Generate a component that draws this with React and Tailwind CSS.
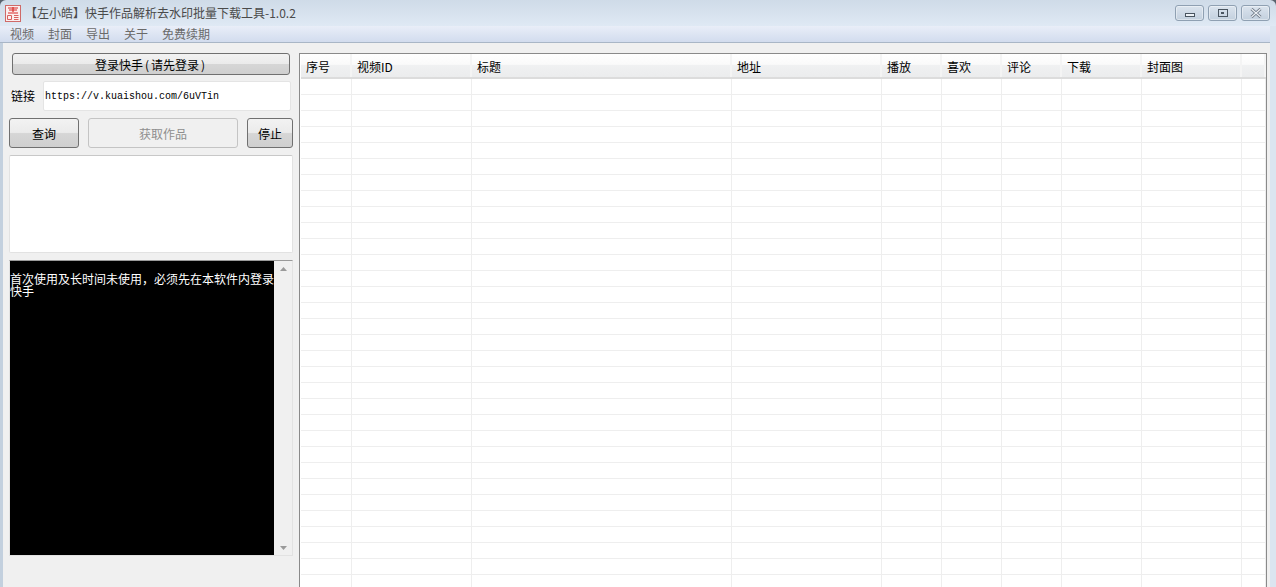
const cjk = "font-['Noto_Sans_CJK_SC','Liberation_Sans',sans-serif]";

const menus = ['视频', '封面', '导出', '关于', '免费续期'];

const columns = [
  { label: '序号', width: 'w-[51px]' },
  { label: '视频ID', width: 'w-[120px]' },
  { label: '标题', width: 'w-[260px]' },
  { label: '地址', width: 'w-[150px]' },
  { label: '播放', width: 'w-[60px]' },
  { label: '喜欢', width: 'w-[60px]' },
  { label: '评论', width: 'w-[60px]' },
  { label: '下载', width: 'w-[80px]' },
  { label: '封面图', width: 'w-[100px]' },
  { label: '', width: 'flex-1' },
];

const rows = Array.from({ length: 32 }, (_, i) => i);

const AppIcon = () => (
  <svg width="16" height="17" viewBox="0 0 16 17" className="shrink-0">
    <rect x="0.5" y="0.5" width="15" height="16" fill="#fbeeee" stroke="#cf6a68" />
    <path d="M3 3h10M8 2v5M4 5h8M3 8h10" stroke="#d92c2a" strokeWidth="1.2" fill="none" />
    <path d="M2.5 10.5h4v4h-4zM9 10.5h4.5M9 12.5h4.5M9 14.5h4.5" fill="none" stroke="#d8605e" strokeWidth="1" />
  </svg>
);

const WinButton = ({ children }) => (
  <div className="w-[29px] h-[16px] flex items-center justify-center rounded-[3px] border border-[#8fa0b2] bg-gradient-to-b from-[#dbe4ee] to-[#c3d0de] shadow-[inset_0_0_0_1px_rgba(255,255,255,0.4)]">
    {children}
  </div>
);

const PushButton = ({ children, className }) => (
  <button className={`flex items-center justify-center pt-[1px] rounded-[3px] border border-[#707070] bg-[linear-gradient(#f2f2f2_0%,#ebebeb_48%,#d6d6d6_52%,#cfcfcf_100%)] text-[12px] leading-none text-black ${className}`}>
    {children}
  </button>
);

export default function App() {
  return (
    <div className={`${cjk} w-[1276px] h-[587px] overflow-hidden flex flex-col bg-[#59626c]`}>
      {/* title bar */}
      <div className="h-[26px] shrink-0 flex items-center pl-[5px] pr-[6px] rounded-t-[6px] bg-gradient-to-b from-[#cfdbe8] to-[#dfe9f4]">
        <AppIcon />
        <span className="ml-[4px] text-[12px] leading-none text-[#4a4a4a]">【左小皓】快手作品解析去水印批量下载工具-1.0.2</span>
        <div className="ml-auto flex gap-[4px] -mt-[1px]">
          <WinButton>
            <div className="w-[10px] h-[4px] mt-[4px] border border-[#4a5560] bg-[#eef3f8]" />
          </WinButton>
          <WinButton>
            <div className="w-[10px] h-[8px] border border-[#4a5560] flex items-center justify-center">
              <div className="w-[3px] h-[2px] bg-[#4a5560]" />
            </div>
          </WinButton>
          <WinButton>
            <svg width="12" height="10" viewBox="0 0 12 10">
              <path d="M1.5 1l9 8M10.5 1l-9 8" stroke="#6c7784" strokeWidth="3" fill="none" />
              <path d="M1.5 1l9 8M10.5 1l-9 8" stroke="#eef2f6" strokeWidth="1.2" fill="none" />
            </svg>
          </WinButton>
        </div>
      </div>

      {/* frame: left and right window edges */}
      <div className="flex-1 min-h-0 flex flex-col bg-[#f0f0f0] border-l-[3px] border-r-[6px] border-l-[#c3d0de] border-r-[#dbe5f0]">
        {/* menu bar */}
        <div className="h-[17px] shrink-0 -ml-[3px] flex items-center gap-[14px] pl-[10px] bg-gradient-to-b from-[#e9eef8] to-[#d2dcee] border-b border-[#a9b6c6] text-[12px] leading-none text-[#6a6a6a]">
          {menus.map((m) => (
            <span key={m}>{m}</span>
          ))}
        </div>

        <div className="flex-1 min-h-0 flex">
          {/* left panel */}
          <div className="w-[296px] shrink-0 pl-[6px] pt-[10px]">
            <PushButton className="ml-[3px] w-[278px] h-[22px]">
              登录快手<span className="mx-[2px]">(</span>请先登录<span className="mx-[2px]">)</span>
            </PushButton>

            <div className="mt-[6px] flex items-center h-[30px]">
              <span className="ml-[2px] w-[32px] text-[12px] leading-none text-black">链接</span>
              <div className="w-[248px] h-[30px] flex items-center pl-[1px] pt-[1px] bg-white border border-[#e4e4e4] rounded-[2px] font-['Liberation_Mono',monospace] text-[10px] leading-none text-black">
                https://v.kuaishou.com/6uVTin
              </div>
            </div>

            <div className="mt-[7px] flex">
              <PushButton className="w-[70px] h-[30px]">查询</PushButton>
              <button className="ml-[9px] w-[150px] h-[30px] pt-[1px] rounded-[3px] border border-[#c4c4c4] bg-[#f0f0f0] text-[12px] leading-none text-[#8e8e8e]">获取作品</button>
              <PushButton className="ml-[9px] w-[46px] h-[30px]">停止</PushButton>
            </div>

            <div className="mt-[7px] w-[284px] h-[98px] bg-white border border-[#e2e2e2] border-t-[#c8c8c8] rounded-[2px]" />

            <div className="mt-[7px] w-[284px] h-[296px] flex border border-[#e2e2e2] border-t-[#9a9a9a] bg-white">
              <div className="w-[264px] shrink-0 bg-black pt-[12px] text-[12px] leading-[12px] text-white">
                {'首次使用及长时间未使用\uFF0C必须先在本软件内登录快手'}
              </div>
              <div className="flex-1 flex flex-col items-center justify-between pt-[6px] pb-[5px] bg-[#f0f0f0]">
                <svg width="7" height="4" viewBox="0 0 7 4"><path d="M3.5 0L7 4H0z" fill="#9a9a9a" /></svg>
                <svg width="7" height="4" viewBox="0 0 7 4"><path d="M0 0h7L3.5 4z" fill="#9a9a9a" /></svg>
              </div>
            </div>
          </div>

          {/* table */}
          <div className="flex-1 min-w-0 mt-[10px] -mb-[4px] mr-[3px] border border-[#8a8a8a] bg-white overflow-hidden">
            <div className="flex h-[25px] ml-[1px] bg-[linear-gradient(#ffffff_0%,#fafafa_45%,#f0f1f2_50%,#ebeced_100%)] border-b-2 border-[#dcdcdc]">
              {columns.map((c, i) => (
                <div key={i} className={`${c.width} shrink-0 flex items-center pl-[5px] pt-[2px] border-r-2 border-[#f4f4f4] text-[12px] leading-none text-black`}>
                  {c.label}
                </div>
              ))}
            </div>
            {rows.map((r) => (
              <div key={r} className="flex h-[16px] ml-[1px] border-b border-[#eeeeee]">
                {columns.map((c, i) => (
                  <div key={i} className={`${c.width} shrink-0 border-r border-[#eeeeee]`} />
                ))}
              </div>
            ))}
          </div>
        </div>
      </div>
    </div>
  );
}
